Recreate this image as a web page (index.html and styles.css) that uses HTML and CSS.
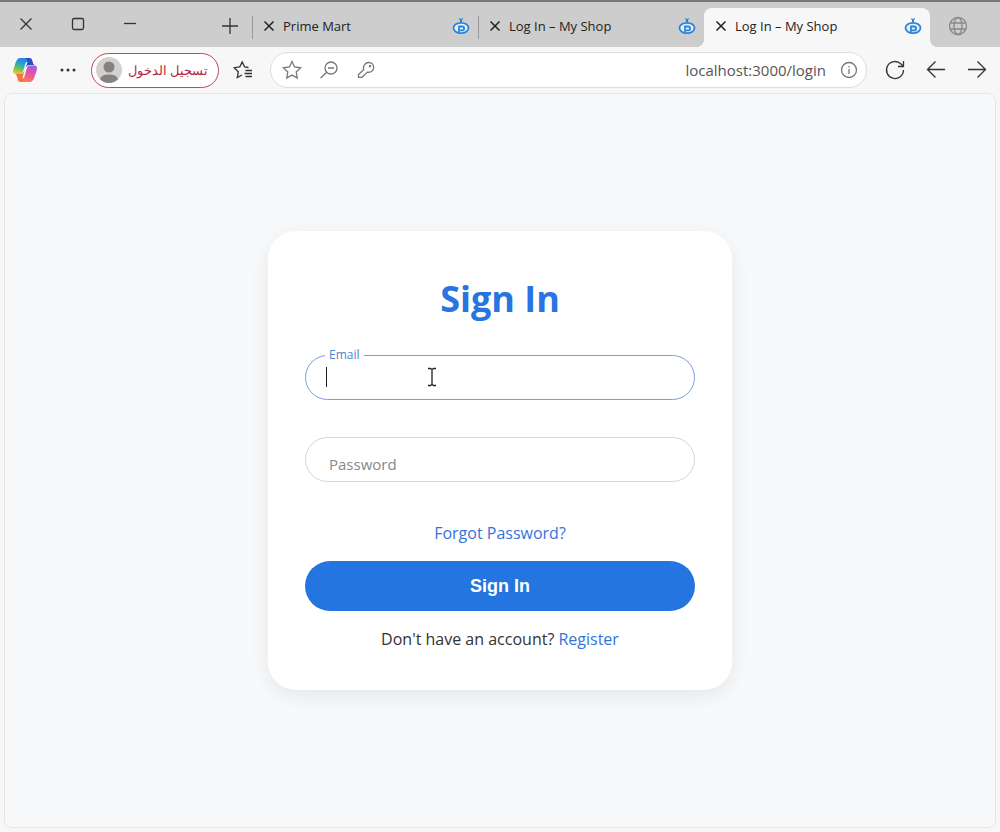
FILE: index.html
```
<!DOCTYPE html>
<html lang="en">
<head>
  <meta charset="UTF-8">
  <meta name="viewport" content="width=device-width, initial-scale=1.0">
  <title>Log In – My Shop</title>
  <link rel="stylesheet" href="styles.css">
</head>
<body>

  <!-- Shapes used on every tab -->
  <svg class="defs" width="0" height="0" aria-hidden="true">
    <symbol id="shop-logo" viewBox="0 0 18 18">
      <path d="M6.800 0.800 9 2l2.200-1.200L10 3.600V5H8V3.600z" fill="#2b84d8"/>
      <ellipse cx="9" cy="11" rx="7.500" ry="5.200" fill="#e4effa" stroke="#2b84d8" stroke-width="1.800"/>
      <path d="M7 15.800V9.500h3.200a1.900 1.900 0 0 1 0 3.800H8" fill="none" stroke="#2b84d8" stroke-width="1.800"/>
    </symbol>
    <symbol id="close" viewBox="0 0 12 12">
      <path d="M1.500 1.500l9 9M10.500 1.500l-9 9" fill="none" stroke="#222" stroke-width="1.500"/>
    </symbol>
  </svg>

  <header class="browser">
    <div class="tab-strip">
      <div class="window-controls">
        <button type="button" aria-label="Close window"><svg width="14" height="14" viewBox="0 0 14 14"><path d="M1.500 1.500l11 11M12.500 1.500l-11 11"/></svg></button>
        <button type="button" aria-label="Maximize"><svg width="14" height="14" viewBox="0 0 14 14"><rect x="1.500" y="1.500" width="11" height="11" rx="1.500"/></svg></button>
        <button type="button" aria-label="Minimize"><svg width="14" height="14" viewBox="0 0 14 14"><path d="M1 6.500h12"/></svg></button>
      </div>
      <button type="button" class="new-tab" aria-label="New tab"><svg width="18" height="18" viewBox="0 0 18 18"><path d="M9 1v16M1 9h16"/></svg></button>
      <div class="tab">
        <button type="button" aria-label="Close tab"><svg width="12" height="12"><use href="#close"/></svg></button>
        <span>Prime Mart</span>
        <svg class="favicon" width="18" height="18"><use href="#shop-logo"/></svg>
      </div>
      <div class="tab">
        <button type="button" aria-label="Close tab"><svg width="12" height="12"><use href="#close"/></svg></button>
        <span>Log In – My Shop</span>
        <svg class="favicon" width="18" height="18"><use href="#shop-logo"/></svg>
      </div>
      <div class="tab active">
        <button type="button" aria-label="Close tab"><svg width="12" height="12"><use href="#close"/></svg></button>
        <span>Log In – My Shop</span>
        <svg class="favicon" width="18" height="18"><use href="#shop-logo"/></svg>
      </div>
      <div class="tab-end">
        <svg width="20" height="20" viewBox="0 0 20 20"><circle cx="10" cy="10" r="8.500"/><ellipse cx="10" cy="10" rx="4" ry="8.500"/><path d="M2.500 7h15M2.500 13h15"/></svg>
      </div>
    </div>

    <div class="toolbar">
      <button type="button" class="tool copilot" aria-label="Copilot">
        <svg width="26" height="26" viewBox="0 0 26 26">
          <defs>
            <linearGradient id="cool" x1="0.600" y1="0" x2="0.300" y2="1">
              <stop offset="0" stop-color="#2a7fe8"/>
              <stop offset="0.350" stop-color="#25a3cf"/>
              <stop offset="0.650" stop-color="#62bf62"/>
              <stop offset="1" stop-color="#f0c828"/>
            </linearGradient>
            <linearGradient id="warm" x1="0.700" y1="0" x2="0.300" y2="1">
              <stop offset="0" stop-color="#a857e0"/>
              <stop offset="0.500" stop-color="#e8559c"/>
              <stop offset="1" stop-color="#f98348"/>
            </linearGradient>
          </defs>
          <path d="M18 1H8.500C5.500 1 4.300 3.500 3 7.500 1.500 12-1 17 4 17h4c2.500 0 3-2 4-5.500l1-3.500C13.800 5 15 4 18 4z" fill="url(#cool)"/>
          <path d="M14 1h3.500c2 0 2.500 1.500 3.200 4 .5 1.800 1 3 2.300 3h-5c-2.500 0-3.500 1-4.500 3.500L15.500 5z" fill="#2450c8"/>
          <path d="M8 25h9.500c3 0 4.200-2.500 5.500-6.500C24.500 14 27 8.500 22 8.500h-4c-2.500 0-3 2-4 5.500l-1 4c-.8 3-2 4-5 4z" fill="url(#warm)"/>
          <path d="M12 25H8.500c-2 0-2.500-1.500-3.200-4-.5-2-1-4-2.300-4h5c2.500 0 3.500-1 4.500-3.500L10.500 21z" fill="#f4743c"/>
        </svg>
      </button>
      <button type="button" class="tool more" aria-label="Settings and more">
        <svg width="18" height="18" viewBox="0 0 18 18"><circle cx="3" cy="9" r="1.500"/><circle cx="9" cy="9" r="1.500"/><circle cx="15" cy="9" r="1.500"/></svg>
      </button>
      <button type="button" class="profile" lang="ar">
        <svg width="26" height="26" viewBox="0 0 26 26"><circle cx="13" cy="13" r="13" fill="#d3d1cf"/><circle cx="13" cy="10" r="5.500" fill="#85827f"/><path d="M4 22.300C5 18.500 8.500 17.500 13 17.500s8 1 9 4.800A13 13 0 0 1 4 22.300z" fill="#85827f"/></svg>
        <span dir="rtl">تسجيل الدخول</span>
      </button>
      <button type="button" class="tool favorites" aria-label="Favorites">
        <svg width="20" height="20" viewBox="0 0 20 20"><path d="M15.500 7.500 11.600 6.900 9.200 2 6.800 6.900 1.200 7.700l4.100 4-1 5.800L9 15M12.500 10.500h6.500M11.500 13.500h7.500M12.500 16.500h6.500"/></svg>
      </button>
      <div class="address">
        <button type="button" aria-label="Add to favorites"><svg width="20" height="20" viewBox="0 0 20 20"><path d="M10 1.500l2.600 5.500 6 .8-4.400 4.200 1.100 6L10 15.100 4.700 18l1.100-6L1.400 7.800l6-.8z"/></svg></button>
        <button type="button" aria-label="Zoom"><svg width="20" height="20" viewBox="0 0 20 20"><circle cx="12" cy="8" r="6"/><path d="M7.500 12.500 1.500 18M9 8h6"/></svg></button>
        <button type="button" aria-label="Passwords"><svg width="20" height="20" viewBox="0 0 20 20"><path d="M7.600 9.800C6.500 5.500 9.500 2.500 12.700 2.500s5 2.300 5 4.900c0 3.200-2.900 5.400-6.200 4.700L6 17.300H2.500v-2.800z"/><circle cx="14" cy="6.200" r="0.600"/></svg></button>
        <input type="text" value="localhost:3000/login" aria-label="Address">
        <button type="button" aria-label="Site information"><svg width="18" height="18" viewBox="0 0 18 18"><circle cx="9" cy="9" r="7.500"/><path d="M9 8v5M9 5v1.500"/></svg></button>
      </div>
      <div class="navigation">
        <button type="button" aria-label="Refresh"><svg width="22" height="22" viewBox="0 0 22 22"><path d="M19.500 11A8.500 8.500 0 1 1 17 5l2 2M19.500 2v5.500H14"/></svg></button>
        <button type="button" aria-label="Back"><svg width="22" height="22" viewBox="0 0 22 22"><path d="M20 10.500H2.500M10.500 2.500l-8 8 8 8"/></svg></button>
        <button type="button" aria-label="Forward"><svg width="22" height="22" viewBox="0 0 22 22"><path d="M2 10.500h17.500M11.500 2.500l8 8-8 8"/></svg></button>
      </div>
    </div>
  </header>

  <main class="page">
    <form class="card">
      <h1>Sign In</h1>
      <div class="field focused">
        <input type="email" id="email">
        <label for="email">Email</label>
        <span class="caret"></span>
        <svg class="pointer" width="12" height="20" viewBox="0 0 12 20"><path d="M2 1.500h2.500L6 2.500l1.500-1H10M6 2.500v15M2 18.500h2.500L6 17.500l1.500 1H10"/></svg>
      </div>
      <div class="field">
        <input type="password" placeholder="Password" aria-label="Password">
      </div>
      <a class="forgot" href="#">Forgot Password?</a>
      <button type="submit" class="submit">Sign In</button>
      <p>Don't have an account? <a href="#">Register</a></p>
    </form>
  </main>

</body>
</html>
```
FILE: styles.css
```
* {
  box-sizing: border-box;
}

body {
  margin: 0;
  min-height: 100vh;
  display: flex;
  flex-direction: column;
  background: #f7f7f7;
  color: #333;
  font-family: "Open Sans", "Noto Sans", sans-serif;
}

button {
  display: flex;
  align-items: center;
  justify-content: center;
  padding: 0;
  border: 0;
  background: none;
  font-family: inherit;
}

svg {
  flex: none;
  fill: none;
  stroke: #333;
  stroke-width: 1.3;
}

a {
  color: #3374dc;
  text-decoration: none;
}

.defs {
  position: absolute;
}

/* Tabs */
.tab-strip {
  display: flex;
  height: 47px;
  border-top: 2px solid #777;
  background: #cdcdcd;
}

.window-controls {
  display: flex;
  margin-right: auto;
}

.window-controls button {
  width: 52px;
  height: 44px;
}

.new-tab {
  width: 44px;
  height: 48px;
}

.tab {
  position: relative;
  display: flex;
  align-items: center;
  flex: 0 1 226px;
  gap: 8px;
  padding: 3px 8px 0 11px;
  color: #222;
  font-size: 13px;
  white-space: nowrap;
}

.tab::before {
  content: "";
  position: absolute;
  left: 0;
  top: 14px;
  width: 1px;
  height: 23px;
  background: #999;
}

.tab .favicon {
  margin-left: auto;
  stroke: none;
}

.tab.active {
  margin-top: 6px;
  padding-top: 0;
  padding-bottom: 3px;
  border-radius: 8px 8px 0 0;
  background: #f7f7f7;
}

/* The active tab flares out into the toolbar */
.tab.active::before,
.tab.active::after {
  content: "";
  position: absolute;
  top: auto;
  bottom: 0;
  width: 8px;
  height: 8px;
}

.tab.active::before {
  left: -8px;
  background: radial-gradient(circle at 0 0, transparent 8px, #f7f7f7 8px);
}

.tab.active::after {
  right: -8px;
  background: radial-gradient(circle at 100% 0, transparent 8px, #f7f7f7 8px);
}

.tab-end {
  display: flex;
  align-items: center;
  width: 70px;
  padding: 3px 0 0 18px;
}

.tab-end svg {
  stroke: #888;
}

/* Toolbar */
.toolbar {
  display: flex;
  align-items: center;
  height: 46px;
  padding: 0 3px;
}

.tool {
  width: 42px;
  height: 36px;
}

.copilot {
  width: 44px;
}

.copilot svg {
  stroke: none;
}

.more svg {
  fill: #333;
  stroke: none;
}

.profile {
  width: 128px;
  height: 35px;
  margin-left: 2px;
  padding: 0 10px 0 4px;
  justify-content: space-between;
  border: 1px solid #bd4857;
  border-radius: 18px;
  background: #fff;
  color: #b5283f;
  font-size: 13px;
  white-space: nowrap;
}

.profile svg {
  stroke: none;
}

.favorites {
  width: 48px;
}

.address {
  display: flex;
  align-items: center;
  flex: 1;
  min-width: 0;
  height: 36px;
  margin: 0 7px 0 3px;
  padding: 0 8px 0 2px;
  border: 1px solid #ddd;
  border-radius: 18px;
  background: #fff;
}

.address button {
  width: 37px;
  height: 32px;
}

.address button:last-child {
  width: 18px;
}

.address svg {
  stroke: #777;
}

.address input {
  flex: 1;
  min-width: 0;
  padding: 0 14px;
  border: 0;
  outline: 0;
  background: none;
  color: #555;
  font-family: inherit;
  font-size: 15px;
  text-align: right;
}

.navigation {
  display: flex;
}

.navigation button {
  width: 41px;
  height: 36px;
}

/* Login page */
.page {
  display: flex;
  align-items: center;
  justify-content: center;
  flex: 1;
  margin: 0 4px 4px;
  border: 1px solid #e6e6e8;
  border-radius: 8px;
  background: #f8f9fb;
}

.card {
  display: flex;
  flex-direction: column;
  width: 100%;
  max-width: 464px;
  padding: 44px 37px 39px;
  border-radius: 28px;
  background: #fff;
  box-shadow: 0 6px 20px rgba(0, 0, 0, 0.08);
  font-size: 16px;
  line-height: 24px;
  text-align: center;
}

h1 {
  margin: 0 0 32px;
  color: #2874e0;
  font-size: 36px;
  line-height: 48px;
}

.field {
  position: relative;
  margin-bottom: 37px;
}

.field input {
  display: block;
  width: 100%;
  height: 45px;
  padding: 8px 23px 0;
  border: 1px solid #d5d6d9;
  border-radius: 23px;
  outline: 0;
  background: #fff;
  font-family: inherit;
  font-size: 15px;
}

.field input::placeholder {
  color: #888;
}

.field.focused input {
  border-color: #7c9fd8;
}

.field label {
  position: absolute;
  left: 20px;
  top: -8px;
  padding: 0 4px;
  background: #fff;
  color: #4a83cf;
  font-size: 12px;
  line-height: 16px;
}

.caret {
  position: absolute;
  left: 21px;
  top: 12px;
  width: 1px;
  height: 20px;
  background: #222;
}

.pointer {
  position: absolute;
  left: 121px;
  top: 12px;
  stroke: #222;
}

.forgot {
  align-self: center;
  margin: 2px 0 16px;
}

.submit {
  height: 50px;
  border-radius: 25px;
  background: #2575e0;
  color: #fff;
  font-family: "Liberation Sans", Arial, sans-serif;
  font-size: 18px;
  font-weight: bold;
}

.card p {
  margin: 16px 0 0;
}
```
